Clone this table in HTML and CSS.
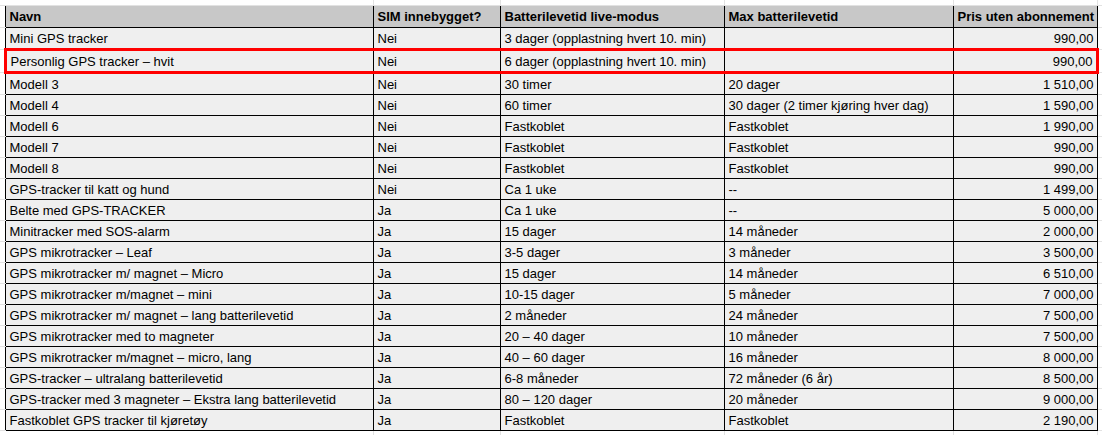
FILE: index.html
```html
<!DOCTYPE html>
<html lang="no">
<head>
<meta charset="utf-8">
<title>GPS trackere</title>
<link rel="stylesheet" href="styles.css">
</head>
<body>
<table class="sheet">
  <colgroup>
    <col class="c-g">
    <col class="c-1">
    <col class="c-2">
    <col class="c-3">
    <col class="c-4">
    <col class="c-5">
    <col class="c-g">
  </colgroup>
  <tr class="gut-top"><td class="gc"></td><td></td><td></td><td></td><td></td><td></td><td class="gc"></td></tr>
  <tr class="head"><td class="gl"></td><th>Navn</th><th>SIM innebygget?</th><th>Batterilevetid live-modus</th><th>Max batterilevetid</th><th>Pris uten abonnement</th><td class="gl"></td></tr>
  <tr class="data"><td class="gl"></td><td>Mini GPS tracker</td><td>Nei</td><td>3 dager (opplastning hvert 10. min)</td><td></td><td class="num">990,00</td><td class="gl"></td></tr>
  <tr class="data hl"><td class="gl"></td><td class="first">Personlig GPS tracker – hvit</td><td>Nei</td><td>6 dager (opplastning hvert 10. min)</td><td></td><td class="num last">990,00</td><td class="gl"></td></tr>
  <tr class="data"><td class="gl"></td><td>Modell 3</td><td>Nei</td><td>30 timer</td><td>20 dager</td><td class="num">1&nbsp;510,00</td><td class="gl"></td></tr>
  <tr class="data"><td class="gl"></td><td>Modell 4</td><td>Nei</td><td>60 timer</td><td>30 dager (2 timer kjøring hver dag)</td><td class="num">1&nbsp;590,00</td><td class="gl"></td></tr>
  <tr class="data"><td class="gl"></td><td>Modell 6</td><td>Nei</td><td>Fastkoblet</td><td>Fastkoblet</td><td class="num">1&nbsp;990,00</td><td class="gl"></td></tr>
  <tr class="data"><td class="gl"></td><td>Modell 7</td><td>Nei</td><td>Fastkoblet</td><td>Fastkoblet</td><td class="num">990,00</td><td class="gl"></td></tr>
  <tr class="data"><td class="gl"></td><td>Modell 8</td><td>Nei</td><td>Fastkoblet</td><td>Fastkoblet</td><td class="num">990,00</td><td class="gl"></td></tr>
  <tr class="data"><td class="gl"></td><td>GPS-tracker til katt og hund</td><td>Nei</td><td>Ca 1 uke</td><td>--</td><td class="num">1&nbsp;499,00</td><td class="gl"></td></tr>
  <tr class="data"><td class="gl"></td><td>Belte med GPS-TRACKER</td><td>Ja</td><td>Ca 1 uke</td><td>--</td><td class="num">5&nbsp;000,00</td><td class="gl"></td></tr>
  <tr class="data"><td class="gl"></td><td>Minitracker med SOS-alarm</td><td>Ja</td><td>15 dager</td><td>14 måneder</td><td class="num">2&nbsp;000,00</td><td class="gl"></td></tr>
  <tr class="data"><td class="gl"></td><td>GPS mikrotracker – Leaf</td><td>Ja</td><td>3-5 dager</td><td>3 måneder</td><td class="num">3&nbsp;500,00</td><td class="gl"></td></tr>
  <tr class="data"><td class="gl"></td><td>GPS mikrotracker m/ magnet – Micro</td><td>Ja</td><td>15 dager</td><td>14 måneder</td><td class="num">6&nbsp;510,00</td><td class="gl"></td></tr>
  <tr class="data"><td class="gl"></td><td>GPS mikrotracker m/magnet – mini</td><td>Ja</td><td>10-15 dager</td><td>5 måneder</td><td class="num">7&nbsp;000,00</td><td class="gl"></td></tr>
  <tr class="data"><td class="gl"></td><td>GPS mikrotracker m/ magnet – lang batterilevetid</td><td>Ja</td><td>2 måneder</td><td>24 måneder</td><td class="num">7&nbsp;500,00</td><td class="gl"></td></tr>
  <tr class="data"><td class="gl"></td><td>GPS mikrotracker med to magneter</td><td>Ja</td><td>20 – 40 dager</td><td>10 måneder</td><td class="num">7&nbsp;500,00</td><td class="gl"></td></tr>
  <tr class="data"><td class="gl"></td><td>GPS mikrotracker m/magnet – micro, lang</td><td>Ja</td><td>40 – 60 dager</td><td>16 måneder</td><td class="num">8&nbsp;000,00</td><td class="gl"></td></tr>
  <tr class="data"><td class="gl"></td><td>GPS-tracker – ultralang batterilevetid</td><td>Ja</td><td>6-8 måneder</td><td>72 måneder (6 år)</td><td class="num">8&nbsp;500,00</td><td class="gl"></td></tr>
  <tr class="data"><td class="gl"></td><td>GPS-tracker med 3 magneter – Ekstra lang batterilevetid</td><td>Ja</td><td>80 – 120 dager</td><td>20 måneder</td><td class="num">9&nbsp;000,00</td><td class="gl"></td></tr>
  <tr class="data"><td class="gl"></td><td>Fastkoblet GPS tracker til kjøretøy</td><td>Ja</td><td>Fastkoblet</td><td>Fastkoblet</td><td class="num">2&nbsp;190,00</td><td class="gl"></td></tr>
  <tr class="gut-bot"><td class="gc"></td><td></td><td></td><td></td><td></td><td></td><td class="gc"></td></tr>
</table>
</body>
</html>
```

FILE: styles.css
```css
html, body {
  margin: 0;
  padding: 0;
  background: #ffffff;
}

body {
  font-family: "Liberation Sans", Arial, sans-serif;
  font-size: 13px;
  color: #000000;
  overflow: hidden;
}

.sheet {
  border-collapse: collapse;
  table-layout: fixed;
  width: 1102px;
}

.c-g { width: 5px; }
.c-1 { width: 368px; }
.c-2 { width: 127px; }
.c-3 { width: 224px; }
.c-4 { width: 229px; }
.c-5 { width: 144px; }

.sheet td,
.sheet th {
  padding: 0 4px;
  height: 20px;
  white-space: nowrap;
  overflow: hidden;
  line-height: 15px;
}

.sheet .gl,
.sheet .gc {
  padding: 0;
}

.gl {
  border-bottom: 1px solid #e2e2e2;
}

.gut-top td {
  height: 5px;
  border-right: 1px solid #e2e2e2;
  border-bottom: 1px solid #e2e2e2;
}

.gut-bot td {
  height: 12px;
  border-right: 1px solid #e2e2e2;
}

.gut-top .gc,
.gut-bot .gc {
  border-right: none;
}

.sheet .head th,
.sheet .head td {
  height: 21px;
}

.head th {
  border: 1px solid #000000;
  background: #c8c8c8;
  font-weight: bold;
  text-align: left;
}

.data td {
  border: 1px solid #000000;
  background: #efefef;
}

.data .gl {
  border: none;
  border-bottom: 1px solid #e2e2e2;
  background: transparent;
}

.head .gl {
  border-bottom: 1px solid #e2e2e2;
  background: transparent;
}

.num {
  text-align: right;
}

.sheet .num {
  padding-right: 3px;
}

.hl td {
  border-top: 3px solid #ff0000;
  border-bottom: 3px solid #ff0000;
}

.hl .first {
  border-left: 3px solid #ff0000;
}

.hl .last {
  border-right: 3px solid #ff0000;
}

.data.hl .gl {
  border-top: none;
  border-bottom: 1px solid #e2e2e2;
}
```
